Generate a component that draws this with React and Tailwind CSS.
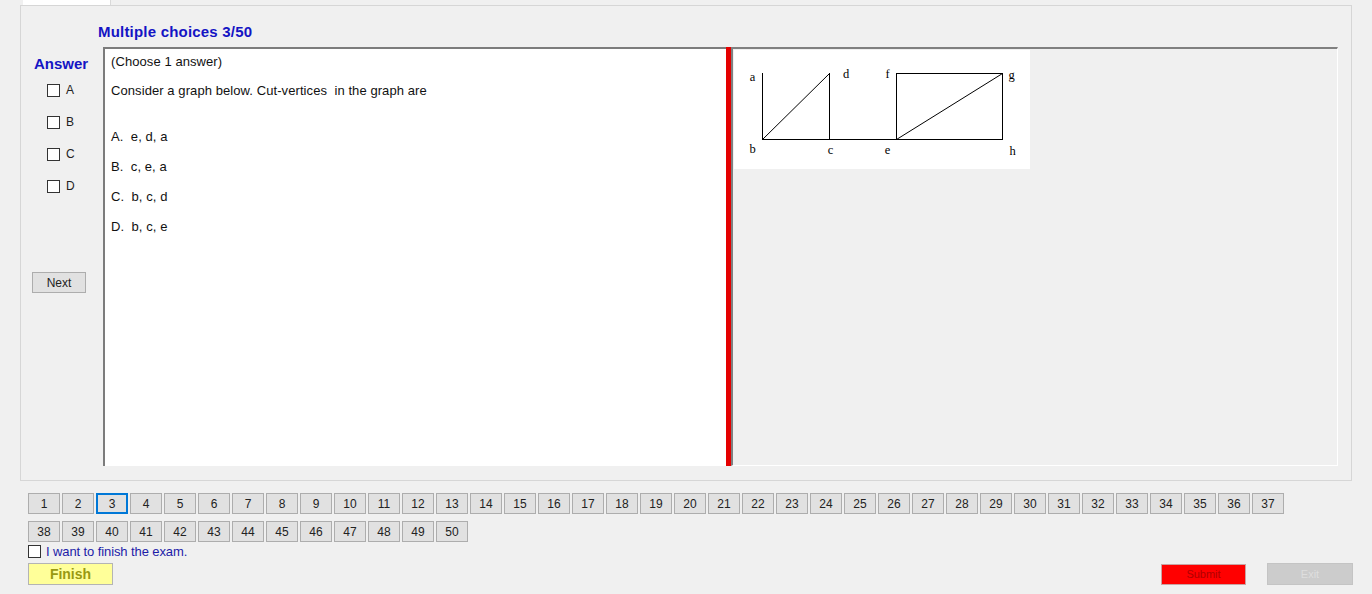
import React from "react";

const nums1 = Array.from({ length: 37 }, (_, i) => i + 1);
const nums2 = Array.from({ length: 13 }, (_, i) => i + 38);

function NumBtn({ n }) {
  const sel = n === 3;
  return (
    <div
      className={
        "w-[32px] h-[21px] flex items-center justify-center text-[12px] text-[#222] bg-[#e1e1e1] " +
        (sel ? "border-2 border-[#0078d7]" : "border border-[#adadad]")
      }
    >
      {n}
    </div>
  );
}

function Check({ label }) {
  return (
    <div className="flex items-center h-[16px] pl-[26px] gap-[6px]">
      <div className="w-[13px] h-[13px] border border-[#333] bg-white" />
      <span className="text-[12px] text-[#222] leading-[16px]">{label}</span>
    </div>
  );
}

function Graph() {
  return (
    <svg width="296" height="119" className="block bg-white">
      <g stroke="#000" strokeWidth="1" fill="none" shapeRendering="crispEdges">
        <line x1="28.5" y1="23" x2="28.5" y2="89.5" />
        <line x1="95.5" y1="23" x2="95.5" y2="89.5" />
        <line x1="28" y1="89.5" x2="163" y2="89.5" />
        <rect x="162.5" y="23.5" width="106" height="66" />
      </g>
      <g stroke="#000" strokeWidth="1">
        <line x1="28.5" y1="89.5" x2="95.5" y2="23.5" />
        <line x1="162.5" y1="89.5" x2="268.5" y2="23.5" />
      </g>
      <g fontFamily="'Liberation Serif', 'Times New Roman', serif" fontSize="12.5" fill="#000" textAnchor="middle">
        <text x="18.5" y="31">a</text>
        <text x="112" y="27.5">d</text>
        <text x="153.5" y="27.5">f</text>
        <text x="277.5" y="29">g</text>
        <text x="18.5" y="103">b</text>
        <text x="96.5" y="103.5">c</text>
        <text x="153.5" y="103.5">e</text>
        <text x="278.5" y="104.5">h</text>
      </g>
    </svg>
  );
}

export default function App() {
  return (
    <div className="w-[1372px] h-[594px] bg-[#f0f0f0] overflow-hidden font-['Liberation_Sans',Arial,sans-serif]">
      {/* tab strip */}
      <div className="h-[5px] flex">
        <div className="ml-[23px] w-[88px] h-[5px] bg-white border-r border-[#d9d9d9]" />
      </div>

      {/* tab page */}
      <div className="mx-[20px] h-[476px] border border-[#d6d6d6] bg-[#f0f0f0] flex flex-col">
        <div className="h-[41px] pl-[77px] pt-[17px]">
          <div className="text-[15px] leading-[17px] font-bold tracking-[0.2px] text-[#1414c4]">Multiple choices 3/50</div>
        </div>

        <div className="flex h-[419px] pr-[13px]">
          {/* left column */}
          <div className="w-[82px] flex flex-col">
            <div className="mt-[8px] pl-[13px] text-[15px] leading-[17px] font-bold text-[#1414c4]">Answer</div>
            <div className="mt-[10px] flex flex-col gap-[16px]">
              <Check label="A" />
              <Check label="B" />
              <Check label="C" />
              <Check label="D" />
            </div>
            <div className="mt-[78px] ml-[11px] w-[54px] h-[21px] bg-[#e1e1e1] border border-[#adadad] flex items-center justify-center text-[12px] text-[#222]">
              Next
            </div>
          </div>

          {/* question box */}
          <div className="w-[623px] h-full bg-white border-t-2 border-l-2 border-[#7c7c7c] pl-[6px] pt-[5px] text-[13px] leading-[16px] tracking-[0.08px] text-[#111]">
            <div>(Choose 1 answer)</div>
            <div className="mt-[13px] whitespace-pre">Consider a graph below. Cut-vertices  in the graph are</div>
            <div className="mt-[30px] whitespace-pre">A.  e, d, a</div>
            <div className="mt-[14px] whitespace-pre">B.  c, e, a</div>
            <div className="mt-[14px] whitespace-pre">C.  b, c, d</div>
            <div className="mt-[14px] whitespace-pre">D.  b, c, e</div>
          </div>

          {/* splitter */}
          <div className="w-[5px] h-full bg-[#e50000]" />

          {/* right panel */}
          <div className="flex-1 h-full bg-[#f0f0f0] border-t-2 border-l-2 border-[#808080] border-r border-b border-r-white border-b-white pl-[1px] pt-[1px]">
            <Graph />
          </div>
        </div>
      </div>

      {/* question numbers */}
      <div className="mt-[12px] pl-[28px] flex flex-col gap-[7px]">
        <div className="flex gap-[2px]">
          {nums1.map((n) => (
            <NumBtn key={n} n={n} />
          ))}
        </div>
        <div className="flex gap-[2px]">
          {nums2.map((n) => (
            <NumBtn key={n} n={n} />
          ))}
        </div>
      </div>

      <div className="mt-[3px] pl-[28px] flex items-center gap-[5px] h-[13px]">
        <div className="w-[13px] h-[13px] border border-[#333] bg-white" />
        <span className="text-[13px] leading-[15px] tracking-[-0.1px] text-[#1c1ca8]">I want to finish the exam.</span>
      </div>

      <div className="mt-[5px] pl-[28px] pr-[19px] flex items-start">
        <div className="w-[85px] h-[22px] bg-[#ffff99] border border-[#b4b4b4] flex items-center justify-center text-[14px] font-bold text-[#999912]">
          Finish
        </div>
        <div className="flex-1" />
        <div className="mt-[1px] w-[85px] h-[21px] bg-[#ff0000] border border-[#c9a3a3] flex items-center justify-center text-[11px] text-[#b00000]">
          Submit
        </div>
        <div className="ml-[21px] w-[86px] h-[22px] bg-[#cccccc] border border-[#c4c4c4] flex items-center justify-center text-[11px] text-[#dedede]">
          Exit
        </div>
      </div>
    </div>
  );
}
